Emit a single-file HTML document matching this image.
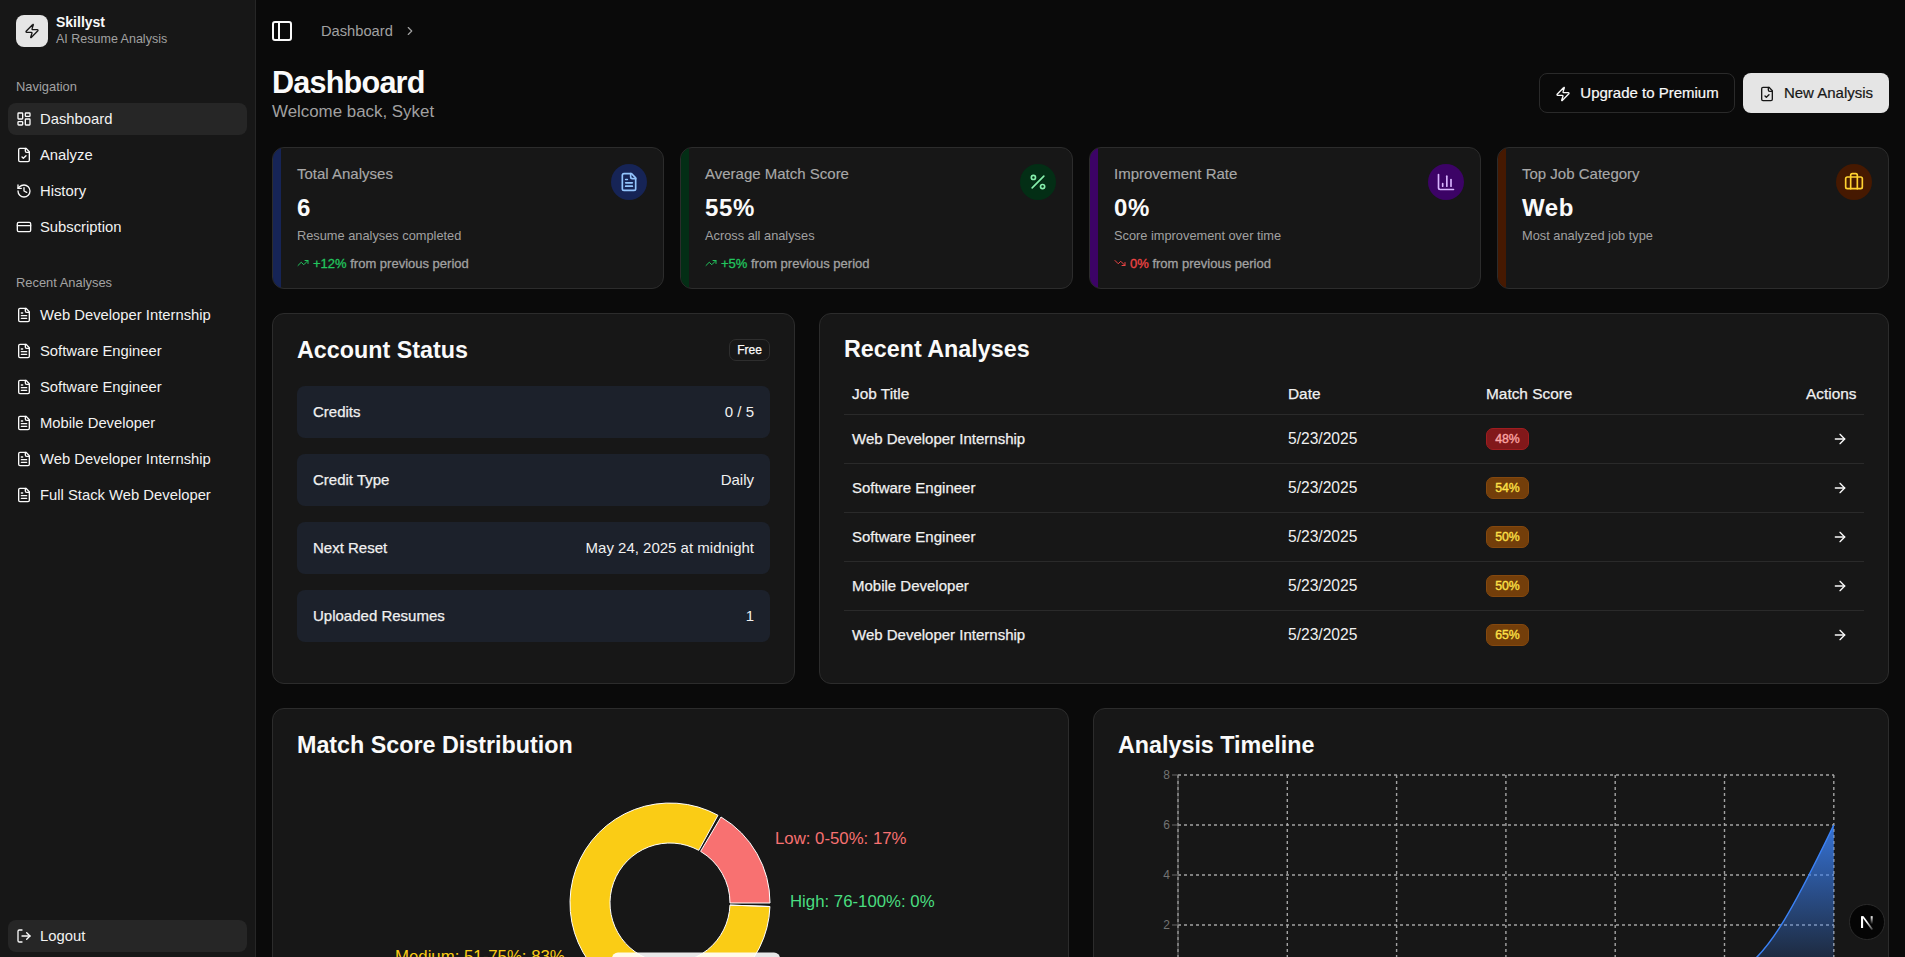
<!DOCTYPE html>
<html><head><meta charset="utf-8">
<style>
*{box-sizing:border-box;margin:0;padding:0}
html,body{width:1905px;height:957px;overflow:hidden;background:#0a0a0a;font-family:"Liberation Sans",sans-serif;color:#fafafa}
.abs{position:absolute}
svg{display:block}
/* sidebar */
#sb{position:absolute;left:0;top:0;width:256px;height:957px;background:#171717;border-right:1px solid #262626}
.logo{position:absolute;left:16px;top:15px;width:32px;height:32px;border-radius:8px;background:#e5e5e5}
.brand{position:absolute;left:56px;top:14px;font-size:14px;font-weight:700;color:#fafafa}
.brand2{position:absolute;left:56px;top:32px;font-size:12.5px;color:#a1a1a1}
.glabel{position:absolute;left:16px;font-size:12.9px;color:#a3a3a3}
.mi{position:absolute;left:8px;width:239px;height:32px;border-radius:8px;display:flex;align-items:center;padding-left:8px;font-size:14.8px;color:#f2f2f2}
.mi svg{margin-right:8px;flex:none}
.mi.act{background:#262626}
/* main */
.crumb{position:absolute;left:321px;top:22.5px;font-size:14.7px;color:#a1a1a1}
.card{position:absolute;background:#171717;border:1px solid #2c2c2c;border-radius:12px}
.stat{overflow:hidden}
.stat .bar{position:absolute;left:0;top:0;bottom:0;width:8px}
.stat .t{position:absolute;left:24px;top:17.1px;font-size:15px;color:#a8a8a8;-webkit-text-stroke:0.15px currentColor}
.stat .v{position:absolute;left:24px;top:46px;font-size:24px;letter-spacing:0.6px;font-weight:700;color:#fafafa}
.stat .d{position:absolute;left:24px;top:79.8px;font-size:12.8px;color:#a1a1a1}
.stat .tr{position:absolute;left:24px;top:107.6px;font-size:13px;font-weight:400;-webkit-text-stroke:0.3px currentColor;color:#a1a1a1;display:flex;align-items:center;white-space:nowrap}
.stat .ic{position:absolute;top:16px;right:16px;width:36px;height:36px;border-radius:50%;display:flex;align-items:center;justify-content:center}
.h2{position:absolute;margin-top:0px;font-size:23.3px;font-weight:700;color:#fafafa;white-space:nowrap}
.row{position:absolute;left:24px;width:473px;height:52px;border-radius:8px;background:#1c212b;display:flex;align-items:center;justify-content:space-between;padding:0 16px 2px;font-size:15px;color:#f0f0f0;-webkit-text-stroke:0.25px currentColor}
.rv{-webkit-text-stroke:0}
.th{position:absolute;top:384.9px;font-size:15.4px;color:#f0f0f0;-webkit-text-stroke:0.25px currentColor}
.tl{position:absolute;left:844px;width:1020px;height:1px;background:#2a2a2a}
.td{position:absolute;font-size:15px;color:#f0f0f0;white-space:nowrap;-webkit-text-stroke:0.25px currentColor;margin-top:0px}
.dt{font-size:15.6px;-webkit-text-stroke:0;margin-top:-0.5px}
.badge{position:absolute;left:1486px;width:43px;height:22px;border-radius:7px;font-size:12.3px;font-weight:400;-webkit-text-stroke:0.35px currentColor;display:flex;align-items:center;justify-content:center}
.b-red{background:#82181a;color:#fca5a5;border:1px solid #9f1d20}
.b-amb{background:#733e0a;color:#fde047;border:1px solid #84480e}
</style></head>
<body>
<!-- SIDEBAR -->
<div id="sb">
  <div class="logo"><svg width="16" height="16" viewBox="0 0 24 24" fill="none" stroke="#171717" stroke-width="2" stroke-linecap="round" stroke-linejoin="round" style="position:absolute;left:8px;top:8px"><path d="M4 14a1 1 0 0 1-.78-1.63l9.9-10.2a.5.5 0 0 1 .86.46l-1.92 6.02A1 1 0 0 0 13 10h7a1 1 0 0 1 .78 1.63l-9.9 10.2a.5.5 0 0 1-.86-.46l1.92-6.02A1 1 0 0 0 11 14z"/></svg></div>
  <div class="brand">Skillyst</div>
  <div class="brand2">AI Resume Analysis</div>
  <div class="glabel" style="top:79px">Navigation</div>
  <div class="mi act" style="top:103px"><svg width="16" height="16" viewBox="0 0 24 24" fill="none" stroke="#fafafa" stroke-width="2" stroke-linecap="round" stroke-linejoin="round"><rect x="3" y="3" width="7" height="9" rx="1"/><rect x="14" y="3" width="7" height="5" rx="1"/><rect x="14" y="12" width="7" height="9" rx="1"/><rect x="3" y="16" width="7" height="5" rx="1"/></svg>Dashboard</div>
  <div class="mi" style="top:139px"><svg width="16" height="16" viewBox="0 0 24 24" fill="none" stroke="#fafafa" stroke-width="2" stroke-linecap="round" stroke-linejoin="round"><path d="M15 2H6a2 2 0 0 0-2 2v16a2 2 0 0 0 2 2h12a2 2 0 0 0 2-2V7Z"/><path d="M14 2v4a2 2 0 0 0 2 2h4"/><path d="m9 15 2 2 4-4"/></svg>Analyze</div>
  <div class="mi" style="top:175px"><svg width="16" height="16" viewBox="0 0 24 24" fill="none" stroke="#fafafa" stroke-width="2" stroke-linecap="round" stroke-linejoin="round"><path d="M3 12a9 9 0 1 0 9-9 9.75 9.75 0 0 0-6.74 2.74L3 8"/><path d="M3 3v5h5"/><path d="M12 7v5l4 2"/></svg>History</div>
  <div class="mi" style="top:211px"><svg width="16" height="16" viewBox="0 0 24 24" fill="none" stroke="#fafafa" stroke-width="2" stroke-linecap="round" stroke-linejoin="round"><rect width="20" height="14" x="2" y="5" rx="2"/><line x1="2" x2="22" y1="10" y2="10"/></svg>Subscription</div>
  <div class="glabel" style="top:275px">Recent Analyses</div>
  <div class="mi" style="top:299px"><svg width="16" height="16" viewBox="0 0 24 24" fill="none" stroke="#fafafa" stroke-width="2" stroke-linecap="round" stroke-linejoin="round"><path d="M15 2H6a2 2 0 0 0-2 2v16a2 2 0 0 0 2 2h12a2 2 0 0 0 2-2V7Z"/><path d="M14 2v4a2 2 0 0 0 2 2h4"/><path d="M10 9H8"/><path d="M16 13H8"/><path d="M16 17H8"/></svg>Web Developer Internship</div>
  <div class="mi" style="top:335px"><svg width="16" height="16" viewBox="0 0 24 24" fill="none" stroke="#fafafa" stroke-width="2" stroke-linecap="round" stroke-linejoin="round"><path d="M15 2H6a2 2 0 0 0-2 2v16a2 2 0 0 0 2 2h12a2 2 0 0 0 2-2V7Z"/><path d="M14 2v4a2 2 0 0 0 2 2h4"/><path d="M10 9H8"/><path d="M16 13H8"/><path d="M16 17H8"/></svg>Software Engineer</div>
  <div class="mi" style="top:371px"><svg width="16" height="16" viewBox="0 0 24 24" fill="none" stroke="#fafafa" stroke-width="2" stroke-linecap="round" stroke-linejoin="round"><path d="M15 2H6a2 2 0 0 0-2 2v16a2 2 0 0 0 2 2h12a2 2 0 0 0 2-2V7Z"/><path d="M14 2v4a2 2 0 0 0 2 2h4"/><path d="M10 9H8"/><path d="M16 13H8"/><path d="M16 17H8"/></svg>Software Engineer</div>
  <div class="mi" style="top:407px"><svg width="16" height="16" viewBox="0 0 24 24" fill="none" stroke="#fafafa" stroke-width="2" stroke-linecap="round" stroke-linejoin="round"><path d="M15 2H6a2 2 0 0 0-2 2v16a2 2 0 0 0 2 2h12a2 2 0 0 0 2-2V7Z"/><path d="M14 2v4a2 2 0 0 0 2 2h4"/><path d="M10 9H8"/><path d="M16 13H8"/><path d="M16 17H8"/></svg>Mobile Developer</div>
  <div class="mi" style="top:443px"><svg width="16" height="16" viewBox="0 0 24 24" fill="none" stroke="#fafafa" stroke-width="2" stroke-linecap="round" stroke-linejoin="round"><path d="M15 2H6a2 2 0 0 0-2 2v16a2 2 0 0 0 2 2h12a2 2 0 0 0 2-2V7Z"/><path d="M14 2v4a2 2 0 0 0 2 2h4"/><path d="M10 9H8"/><path d="M16 13H8"/><path d="M16 17H8"/></svg>Web Developer Internship</div>
  <div class="mi" style="top:479px"><svg width="16" height="16" viewBox="0 0 24 24" fill="none" stroke="#fafafa" stroke-width="2" stroke-linecap="round" stroke-linejoin="round"><path d="M15 2H6a2 2 0 0 0-2 2v16a2 2 0 0 0 2 2h12a2 2 0 0 0 2-2V7Z"/><path d="M14 2v4a2 2 0 0 0 2 2h4"/><path d="M10 9H8"/><path d="M16 13H8"/><path d="M16 17H8"/></svg>Full Stack Web Developer</div>
  <div class="mi act" style="top:920px"><svg width="16" height="16" viewBox="0 0 24 24" fill="none" stroke="#fafafa" stroke-width="2" stroke-linecap="round" stroke-linejoin="round"><path d="M9 21H5a2 2 0 0 1-2-2V5a2 2 0 0 1 2-2h4"/><polyline points="16 17 21 12 16 7"/><line x1="21" x2="9" y1="12" y2="12"/></svg>Logout</div>
</div>

<!-- HEADER -->
<svg class="abs" style="left:270px;top:19px" width="24" height="24" viewBox="0 0 24 24" fill="none" stroke="#fafafa" stroke-width="2" stroke-linecap="round" stroke-linejoin="round"><rect width="18" height="18" x="3" y="3" rx="2"/><path d="M9 3v18"/></svg>
<div class="crumb">Dashboard</div>
<svg class="abs" style="left:403px;top:24px" width="14" height="14" viewBox="0 0 24 24" fill="none" stroke="#a1a1a1" stroke-width="2" stroke-linecap="round" stroke-linejoin="round"><path d="m9 18 6-6-6-6"/></svg>
<div class="abs" style="left:272px;top:64.6px;font-size:30.6px;letter-spacing:-0.8px;font-weight:700;color:#fafafa">Dashboard</div>
<div class="abs" style="left:272px;top:102.2px;font-size:16.9px;color:#a1a1a1">Welcome back, Syket</div>

<div class="abs" style="left:1539px;top:73px;width:196px;height:40px;border:1px solid #2a2a2a;border-radius:8px;background:#0a0a0a;display:flex;align-items:center;justify-content:center;font-size:15px;color:#fafafa;padding-bottom:1.5px;-webkit-text-stroke:0.2px currentColor">
  <svg width="16" height="16" viewBox="0 0 24 24" fill="none" stroke="#fafafa" stroke-width="2" stroke-linecap="round" stroke-linejoin="round" style="margin-right:9px;position:relative;top:1.5px"><path d="M4 14a1 1 0 0 1-.78-1.63l9.9-10.2a.5.5 0 0 1 .86.46l-1.92 6.02A1 1 0 0 0 13 10h7a1 1 0 0 1 .78 1.63l-9.9 10.2a.5.5 0 0 1-.86-.46l1.92-6.02A1 1 0 0 0 11 14z"/></svg>Upgrade to Premium</div>
<div class="abs" style="left:1743px;top:73px;width:146px;height:40px;border-radius:8px;background:#e5e5e5;display:flex;align-items:center;justify-content:center;font-size:15px;color:#171717;padding-bottom:1.5px;-webkit-text-stroke:0.2px currentColor">
  <svg width="16" height="16" viewBox="0 0 24 24" fill="none" stroke="#171717" stroke-width="2" stroke-linecap="round" stroke-linejoin="round" style="margin-right:9px;position:relative;top:1.5px"><path d="M15 2H6a2 2 0 0 0-2 2v16a2 2 0 0 0 2 2h12a2 2 0 0 0 2-2V7Z"/><path d="M14 2v4a2 2 0 0 0 2 2h4"/><path d="m9 15 2 2 4-4"/></svg>New Analysis</div>

<!-- STAT CARDS -->
<div class="card stat" style="left:272px;top:147px;width:392px;height:142px">
  <div class="bar" style="background:#162456"></div>
  <div class="t">Total Analyses</div>
  <div class="v">6</div>
  <div class="d">Resume analyses completed</div>
  <div class="tr"><svg width="12" height="12" viewBox="0 0 24 24" fill="none" stroke="#22c55e" stroke-width="2" stroke-linecap="round" stroke-linejoin="round" style="margin-right:4px"><polyline points="22 7 13.5 15.5 8.5 10.5 2 17"/><polyline points="16 7 22 7 22 13"/></svg><span style="color:#22c55e">+12%</span>&nbsp;from previous period</div>
  <div class="ic" style="background:#162456"><svg width="20" height="20" viewBox="0 0 24 24" fill="none" stroke="#93c5fd" stroke-width="2" stroke-linecap="round" stroke-linejoin="round"><path d="M15 2H6a2 2 0 0 0-2 2v16a2 2 0 0 0 2 2h12a2 2 0 0 0 2-2V7Z"/><path d="M14 2v4a2 2 0 0 0 2 2h4"/><path d="M10 9H8"/><path d="M16 13H8"/><path d="M16 17H8"/></svg></div>
</div>
<div class="card stat" style="left:680px;top:147px;width:393px;height:142px">
  <div class="bar" style="background:#032e15"></div>
  <div class="t">Average Match Score</div>
  <div class="v">55%</div>
  <div class="d">Across all analyses</div>
  <div class="tr"><svg width="12" height="12" viewBox="0 0 24 24" fill="none" stroke="#22c55e" stroke-width="2" stroke-linecap="round" stroke-linejoin="round" style="margin-right:4px"><polyline points="22 7 13.5 15.5 8.5 10.5 2 17"/><polyline points="16 7 22 7 22 13"/></svg><span style="color:#22c55e">+5%</span>&nbsp;from previous period</div>
  <div class="ic" style="background:#032e15"><svg width="20" height="20" viewBox="0 0 24 24" fill="none" stroke="#86efac" stroke-width="2" stroke-linecap="round" stroke-linejoin="round"><line x1="19" x2="5" y1="5" y2="19"/><circle cx="6.5" cy="6.5" r="2.5"/><circle cx="17.5" cy="17.5" r="2.5"/></svg></div>
</div>
<div class="card stat" style="left:1089px;top:147px;width:392px;height:142px">
  <div class="bar" style="background:#3c0366"></div>
  <div class="t">Improvement Rate</div>
  <div class="v">0%</div>
  <div class="d">Score improvement over time</div>
  <div class="tr"><svg width="12" height="12" viewBox="0 0 24 24" fill="none" stroke="#ef4444" stroke-width="2" stroke-linecap="round" stroke-linejoin="round" style="margin-right:4px"><polyline points="22 17 13.5 8.5 8.5 13.5 2 7"/><polyline points="16 17 22 17 22 11"/></svg><span style="color:#ef4444">0%</span>&nbsp;from previous period</div>
  <div class="ic" style="background:#3c0366"><svg width="20" height="20" viewBox="0 0 24 24" fill="none" stroke="#d8b4fe" stroke-width="2" stroke-linecap="round" stroke-linejoin="round"><path d="M3 3v16a2 2 0 0 0 2 2h16"/><path d="M18 17V9"/><path d="M13 17V5"/><path d="M8 17v-3"/></svg></div>
</div>
<div class="card stat" style="left:1497px;top:147px;width:392px;height:142px">
  <div class="bar" style="background:#461901"></div>
  <div class="t">Top Job Category</div>
  <div class="v">Web</div>
  <div class="d">Most analyzed job type</div>
  <div class="ic" style="background:#461901"><svg width="20" height="20" viewBox="0 0 24 24" fill="none" stroke="#ffd230" stroke-width="2" stroke-linecap="round" stroke-linejoin="round"><path d="M16 20V4a2 2 0 0 0-2-2h-4a2 2 0 0 0-2 2v16"/><rect width="20" height="14" x="2" y="6" rx="2"/></svg></div>
</div>

<!-- ACCOUNT STATUS -->
<div class="card" style="left:272px;top:313px;width:523px;height:371px">
  <div class="h2" style="left:24px;top:23px">Account Status</div>
  <div class="abs" style="right:24px;top:25px;width:41px;height:22px;border:1px solid #2e2e2e;border-radius:7px;font-size:12px;font-weight:400;-webkit-text-stroke:0.25px currentColor;display:flex;align-items:center;justify-content:center;color:#fafafa">Free</div>
  <div class="row" style="top:72px"><span>Credits</span><span class="rv">0 / 5</span></div>
  <div class="row" style="top:140px"><span>Credit Type</span><span class="rv">Daily</span></div>
  <div class="row" style="top:208px"><span>Next Reset</span><span class="rv">May 24, 2025 at midnight</span></div>
  <div class="row" style="top:276px"><span>Uploaded Resumes</span><span class="rv">1</span></div>
</div>

<!-- RECENT ANALYSES -->
<div class="card" style="left:819px;top:313px;width:1070px;height:371px"></div>
<div class="h2" style="left:844px;top:336px">Recent Analyses</div>
<div class="th" style="left:852px">Job Title</div>
<div class="th" style="left:1288px">Date</div>
<div class="th" style="left:1486px">Match Score</div>
<div class="th" style="left:1806px">Actions</div>
<div class="tl" style="top:414px"></div>
<div class="td" style="left:852px;top:430px">Web Developer Internship</div><div class="td dt" style="left:1288px;top:430px">5/23/2025</div><div class="badge b-red" style="top:428px">48%</div>
<svg class="abs" style="left:1832px;top:431px" width="16" height="16" viewBox="0 0 24 24" fill="none" stroke="#fafafa" stroke-width="2" stroke-linecap="round" stroke-linejoin="round"><path d="M5 12h14"/><path d="m12 5 7 7-7 7"/></svg>
<div class="tl" style="top:463px"></div>
<div class="td" style="left:852px;top:479px">Software Engineer</div><div class="td dt" style="left:1288px;top:479px">5/23/2025</div><div class="badge b-amb" style="top:477px">54%</div>
<svg class="abs" style="left:1832px;top:480px" width="16" height="16" viewBox="0 0 24 24" fill="none" stroke="#fafafa" stroke-width="2" stroke-linecap="round" stroke-linejoin="round"><path d="M5 12h14"/><path d="m12 5 7 7-7 7"/></svg>
<div class="tl" style="top:512px"></div>
<div class="td" style="left:852px;top:528px">Software Engineer</div><div class="td dt" style="left:1288px;top:528px">5/23/2025</div><div class="badge b-amb" style="top:526px">50%</div>
<svg class="abs" style="left:1832px;top:529px" width="16" height="16" viewBox="0 0 24 24" fill="none" stroke="#fafafa" stroke-width="2" stroke-linecap="round" stroke-linejoin="round"><path d="M5 12h14"/><path d="m12 5 7 7-7 7"/></svg>
<div class="tl" style="top:561px"></div>
<div class="td" style="left:852px;top:577px">Mobile Developer</div><div class="td dt" style="left:1288px;top:577px">5/23/2025</div><div class="badge b-amb" style="top:575px">50%</div>
<svg class="abs" style="left:1832px;top:578px" width="16" height="16" viewBox="0 0 24 24" fill="none" stroke="#fafafa" stroke-width="2" stroke-linecap="round" stroke-linejoin="round"><path d="M5 12h14"/><path d="m12 5 7 7-7 7"/></svg>
<div class="tl" style="top:610px"></div>
<div class="td" style="left:852px;top:626px">Web Developer Internship</div><div class="td dt" style="left:1288px;top:626px">5/23/2025</div><div class="badge b-amb" style="top:624px">65%</div>
<svg class="abs" style="left:1832px;top:627px" width="16" height="16" viewBox="0 0 24 24" fill="none" stroke="#fafafa" stroke-width="2" stroke-linecap="round" stroke-linejoin="round"><path d="M5 12h14"/><path d="m12 5 7 7-7 7"/></svg>

<!-- MATCH SCORE DISTRIBUTION -->
<div class="card" style="left:272px;top:708px;width:797px;height:270px"></div>
<div class="h2" style="left:297px;top:732px">Match Score Distribution</div>
<svg class="abs" style="left:272px;top:708px" width="797" height="249" viewBox="272 708 797 249">
  <path d="M717.97 815.26 A100 100 0 1 0 769.94 906.49 L729.96 905.09 A60 60 0 1 1 698.78 850.35 Z" fill="#facc15" stroke="#fff" stroke-width="1"/>
  <path d="M770.00 903.00 A100 100 0 0 0 721.00 816.99 L700.60 851.39 A60 60 0 0 1 730.00 903.00 Z" fill="#f87171" stroke="#fff" stroke-width="1"/>
  <line x1="729.96" y1="905.09" x2="769.94" y2="906.49" stroke="#fff" stroke-width="1"/>
  <text x="775" y="844" font-family="Liberation Sans" font-size="16.8" fill="#f87171">Low: 0-50%: 17%</text>
  <text x="790" y="907" font-family="Liberation Sans" font-size="16.8" fill="#4ade80">High: 76-100%: 0%</text>
  <text x="395" y="962" font-family="Liberation Sans" font-size="16.8" fill="#facc15">Medium: 51-75%: 83%</text>
  <rect x="612" y="952.4" width="168" height="40" rx="6" fill="#ffffff" fill-opacity="0.9"/>
</svg>

<!-- ANALYSIS TIMELINE -->
<div class="card" style="left:1093px;top:708px;width:796px;height:270px"></div>
<div class="h2" style="left:1118px;top:732px">Analysis Timeline</div>
<svg class="abs" style="left:1093px;top:708px" width="796" height="249" viewBox="1093 708 796 249">
  <defs><linearGradient id="ag" x1="0" y1="0" x2="0" y2="1"><stop offset="0" stop-color="#3b82f6" stop-opacity="0.85"/><stop offset="1" stop-color="#3b82f6" stop-opacity="0.1"/></linearGradient></defs>
  <g stroke="#a3a3a3" stroke-width="1.4" stroke-dasharray="3 3" fill="none">
    <line x1="1178" y1="775" x2="1834" y2="775"/>
    <line x1="1178" y1="825" x2="1834" y2="825"/>
    <line x1="1178" y1="875" x2="1834" y2="875"/>
    <line x1="1178" y1="925" x2="1834" y2="925"/>
    <line x1="1287.3" y1="775" x2="1287.3" y2="975"/>
    <line x1="1396.6" y1="775" x2="1396.6" y2="975"/>
    <line x1="1505.9" y1="775" x2="1505.9" y2="975"/>
    <line x1="1615.2" y1="775" x2="1615.2" y2="975"/>
    <line x1="1724.5" y1="775" x2="1724.5" y2="975"/>
    <line x1="1833.8" y1="775" x2="1833.8" y2="975"/>
  </g>
  <line x1="1178" y1="775" x2="1178" y2="975" stroke="#666" stroke-width="1"/>
  <line x1="1178" y1="775" x2="1178" y2="975" stroke="#a3a3a3" stroke-width="1.2" stroke-dasharray="3 3"/>
  <g stroke="#666" stroke-width="1"><line x1="1172" y1="775" x2="1178" y2="775"/><line x1="1172" y1="825" x2="1178" y2="825"/><line x1="1172" y1="875" x2="1178" y2="875"/><line x1="1172" y1="925" x2="1178" y2="925"/></g>
  <g font-family="Liberation Sans" font-size="12" fill="#737373" text-anchor="end"><text x="1170" y="779">8</text><text x="1170" y="829">6</text><text x="1170" y="879">4</text><text x="1170" y="929">2</text></g>
  <path d="M1724.5 975 C1761 975 1797.6 900 1833.8 825 L1833.8 975 Z" fill="url(#ag)"/>
  <path d="M1724.5 975 C1761 975 1797.6 900 1833.8 825" fill="none" stroke="#3b82f6" stroke-width="1.5"/>
</svg>

<div class="abs" style="left:1849px;top:904px;width:35.5px;height:35.5px;border-radius:50%;background:#050505;border:1px solid #2b2b2b"></div>
<svg class="abs" style="left:1855px;top:910px" width="24" height="24" viewBox="1855 910 24 24"><defs><linearGradient id="ng1" x1="0" y1="0" x2="0" y2="1"><stop offset="0" stop-color="#fff"/><stop offset="1" stop-color="#fff" stop-opacity="0"/></linearGradient><linearGradient id="ng2" gradientUnits="userSpaceOnUse" x1="1866" y1="922" x2="1873" y2="930"><stop offset="0" stop-color="#fff"/><stop offset="1" stop-color="#fff" stop-opacity="0.2"/></linearGradient></defs>
<rect x="1861" y="916.2" width="2.1" height="11.8" fill="#fff"/>
<path d="M1861.6 916.2 L1863.6 916.2 L1873.2 929.3 L1871.4 929.8 Z" fill="url(#ng2)"/>
<rect x="1870.7" y="916.2" width="2" height="8" fill="url(#ng1)"/>
</svg>
</body></html>
